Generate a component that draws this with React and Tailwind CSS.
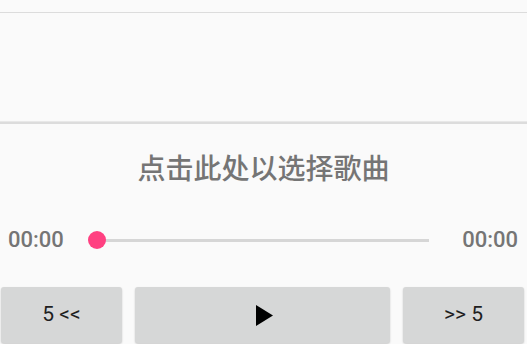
export default function App() {
    return (
        <div className="h-[344px] w-[527px] overflow-hidden bg-[#fafafa] flex flex-col" style={{ fontFamily: 'Roboto, "Noto Sans CJK SC", sans-serif' }}>
            <div className="h-[12px]"></div>
            <div className="h-px bg-[#dcdcdc]"></div>
            <div className="h-[108px]"></div>
            <div className="h-[3px] bg-[#dcdcdc] border-t border-[#e8e8e8]"></div>

            <div className="h-[86px] flex items-center justify-center">
                <span className="text-[28px] font-medium leading-none text-[#757575]" style={{ fontFamily: '"Noto Sans CJK SC", sans-serif' }}>
                    点击此处以选择歌曲
                </span>
            </div>

            <div className="h-[60px] flex items-center pl-[8px] pr-[9px]">
                <span className="text-[22px] font-medium leading-none text-[#757575]">00:00</span>
                <div className="relative flex-1 mx-[24px] h-[18px] flex items-center">
                    <div className="mx-[9px] flex-1 h-[3px] bg-[#d6d6d6]"></div>
                    <div className="absolute left-0 top-0 w-[18px] h-[18px] rounded-full bg-[#ff4081]"></div>
                </div>
                <span className="text-[22px] font-medium leading-none text-[#757575]">00:00</span>
            </div>

            <div className="h-[17px]"></div>

            <div className="flex gap-[13px] pl-[1px] pr-[3px] h-[56px]">
                <button className="w-[121px] rounded-[3px] bg-[#d6d7d7] shadow-[0_1px_2px_rgba(0,0,0,0.2)] text-[21px] text-[#1f1f1f] flex items-center justify-center">
                    5 &lt;&lt;
                </button>
                <button className="flex-1 rounded-[3px] bg-[#d6d7d7] shadow-[0_1px_2px_rgba(0,0,0,0.2)] flex items-center justify-center">
                    <svg className="ml-[4px]" width="17" height="21" viewBox="0 0 17 21">
                        <polygon points="0,0 17,10.5 0,21" fill="#000" />
                    </svg>
                </button>
                <button className="w-[121px] rounded-[3px] bg-[#d6d7d7] shadow-[0_1px_2px_rgba(0,0,0,0.2)] text-[21px] text-[#1f1f1f] flex items-center justify-center">
                    &gt;&gt; 5
                </button>
            </div>
        </div>
    )
}
